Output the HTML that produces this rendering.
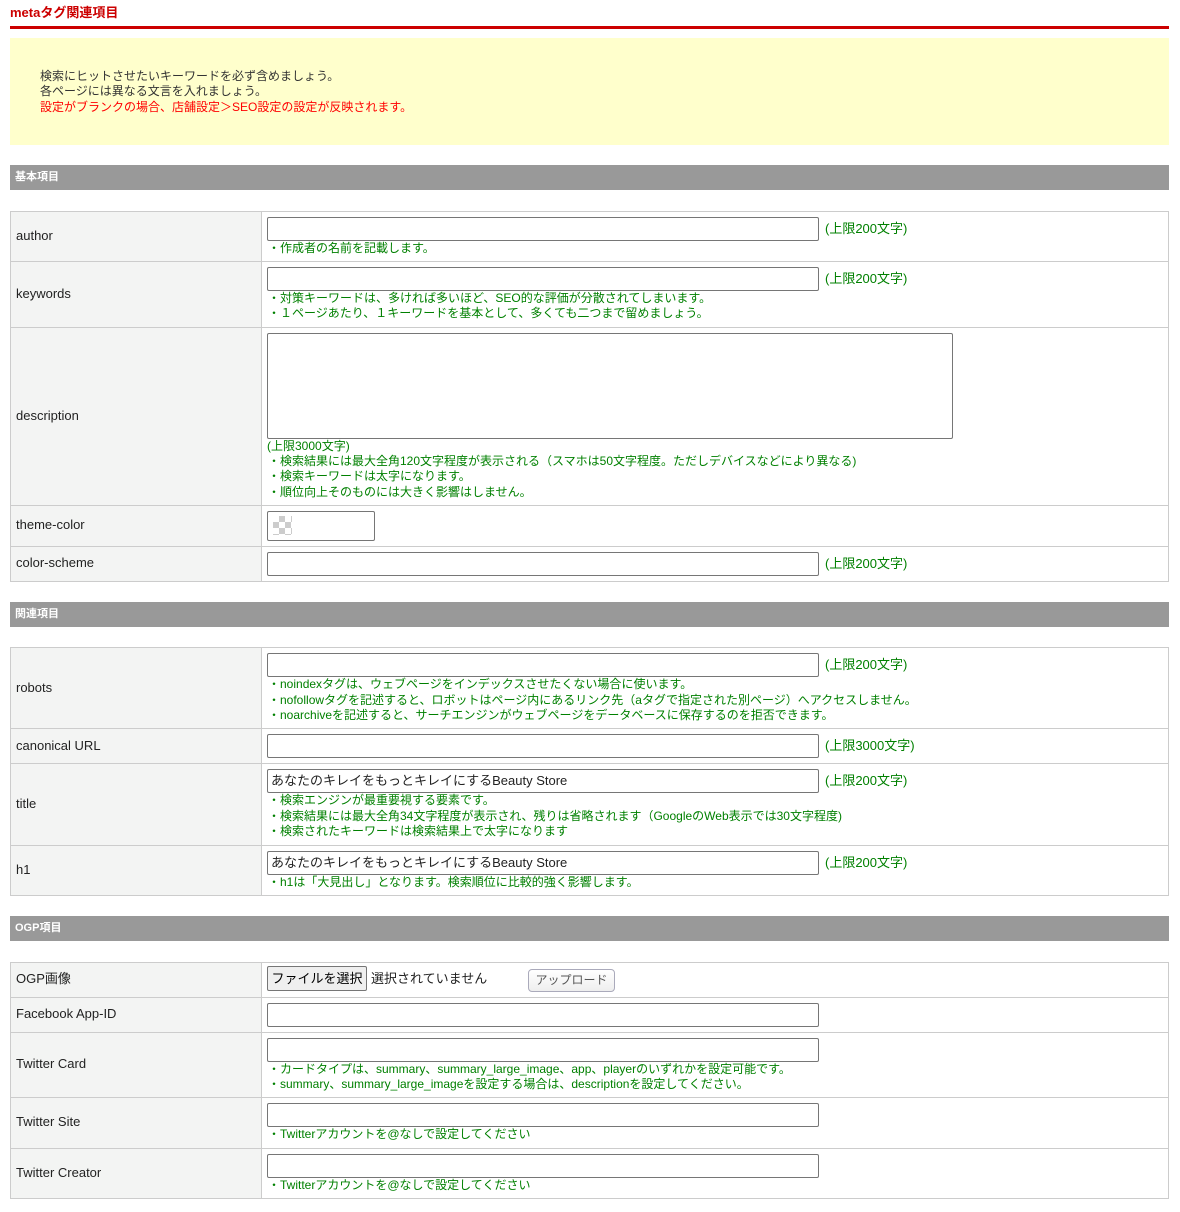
<!DOCTYPE html>
<html><head><meta charset="utf-8">
<style>
*{margin:0;padding:0;box-sizing:border-box}
body{width:1180px;height:1212px;background:#fff;position:relative;font-family:"Liberation Sans","Noto Sans CJK JP",sans-serif;font-size:12px;color:#333;overflow:hidden}
div,span{position:absolute}
.t{line-height:16px;white-space:nowrap;margin-top:1px}
.g{color:#008000}
.hd{left:10px;width:1159px;height:25px;background:#999;color:#fff;font-weight:bold;font-size:11px;padding:4px 5px;line-height:16px}
.lb{left:10px;width:252px;background:#f3f4f3;border:1px solid #ccc;border-right:1px solid #ccc}
.rw{left:261px;width:908px;border:1px solid #ccc;border-left:none}
.in{left:267px;width:552px;height:24px;border:1px solid #767676;border-radius:2px;background:#fff}
.lab{left:16px;color:#222;font-size:13px;line-height:16px}
.v{font-size:13px}
</style></head><body>
<div class="t" style="left:10px;top:4px;color:#c00;font-weight:bold;font-size:13px">metaタグ関連項目</div>
<div style="left:10px;top:26px;width:1159px;height:3px;background:#c00"></div>
<div style="left:10px;top:38px;width:1159px;height:107px;background:#ffc"></div>
<div class="t" style="left:40px;top:67px">検索にヒットさせたいキーワードを必ず含めましょう。</div>
<div class="t" style="left:40px;top:82px">各ページには異なる文言を入れましょう。</div>
<div class="t" style="left:40px;top:98px;color:#f00">設定がブランクの場合、店舗設定＞SEO設定の設定が反映されます。</div>

<div class="hd" style="top:165px">基本項目</div>

<div class="lb" style="top:211px;height:51px"></div><div class="rw" style="top:211px;height:51px"></div>
<div class="lb" style="top:261px;height:67px"></div><div class="rw" style="top:261px;height:67px"></div>
<div class="lb" style="top:327px;height:179px"></div><div class="rw" style="top:327px;height:179px"></div>
<div class="lb" style="top:505px;height:42px"></div><div class="rw" style="top:505px;height:42px"></div>
<div class="lb" style="top:546px;height:36px"></div><div class="rw" style="top:546px;height:36px"></div>

<div class="t lab" style="top:227px">author</div>
<div class="in" style="top:217px"></div><div class="t g v" style="left:825px;top:220px">(上限200文字)</div>
<div class="t g" style="left:268px;top:239px">・作成者の名前を記載します。</div>

<div class="t lab" style="top:285px">keywords</div>
<div class="in" style="top:267px"></div><div class="t g v" style="left:825px;top:270px">(上限200文字)</div>
<div class="t g" style="left:268px;top:289px">・対策キーワードは、多ければ多いほど、SEO的な評価が分散されてしまいます。</div>
<div class="t g" style="left:268px;top:304px">・１ページあたり、１キーワードを基本として、多くても二つまで留めましょう。</div>

<div class="t lab" style="top:407px">description</div>
<div class="in" style="top:333px;width:686px;height:106px"></div>
<div class="t g" style="left:267px;top:437px">(上限3000文字)</div>
<div class="t g" style="left:268px;top:452px">・検索結果には最大全角120文字程度が表示される（スマホは50文字程度。ただしデバイスなどにより異なる)</div>
<div class="t g" style="left:268px;top:467px">・検索キーワードは太字になります。</div>
<div class="t g" style="left:268px;top:483px">・順位向上そのものには大きく影響はしません。</div>

<div class="t lab" style="top:516px">theme-color</div>
<div class="in" style="top:511px;width:108px;height:30px"></div>
<div style="left:273px;top:516px;width:19px;height:19px;background:conic-gradient(#ccc 25%,#fff 0 50%,#ccc 0 75%,#fff 0);background-size:12px 12px"></div>

<div class="t lab" style="top:554px">color-scheme</div>
<div class="in" style="top:552px"></div><div class="t g v" style="left:825px;top:555px">(上限200文字)</div>

<div class="hd" style="top:602px">関連項目</div>

<div class="lb" style="top:647px;height:82px"></div><div class="rw" style="top:647px;height:82px"></div>
<div class="lb" style="top:728px;height:36px"></div><div class="rw" style="top:728px;height:36px"></div>
<div class="lb" style="top:763px;height:83px"></div><div class="rw" style="top:763px;height:83px"></div>
<div class="lb" style="top:845px;height:51px"></div><div class="rw" style="top:845px;height:51px"></div>

<div class="t lab" style="top:679px">robots</div>
<div class="in" style="top:653px"></div><div class="t g v" style="left:825px;top:656px">(上限200文字)</div>
<div class="t g" style="left:268px;top:675px">・noindexタグは、ウェブページをインデックスさせたくない場合に使います。</div>
<div class="t g" style="left:268px;top:691px">・nofollowタグを記述すると、ロボットはページ内にあるリンク先（aタグで指定された別ページ）へアクセスしません。</div>
<div class="t g" style="left:268px;top:706px">・noarchiveを記述すると、サーチエンジンがウェブページをデータベースに保存するのを拒否できます。</div>

<div class="t lab" style="top:737px">canonical URL</div>
<div class="in" style="top:734px"></div><div class="t g v" style="left:825px;top:737px">(上限3000文字)</div>

<div class="t lab" style="top:795px">title</div>
<div class="in" style="top:769px"></div><div class="t v" style="left:271px;top:772px;color:#222">あなたのキレイをもっとキレイにするBeauty Store</div>
<div class="t g v" style="left:825px;top:772px">(上限200文字)</div>
<div class="t g" style="left:268px;top:791px">・検索エンジンが最重要視する要素です。</div>
<div class="t g" style="left:268px;top:807px">・検索結果には最大全角34文字程度が表示され、残りは省略されます（GoogleのWeb表示では30文字程度)</div>
<div class="t g" style="left:268px;top:822px">・検索されたキーワードは検索結果上で太字になります</div>

<div class="t lab" style="top:861px">h1</div>
<div class="in" style="top:851px"></div><div class="t v" style="left:271px;top:854px;color:#222">あなたのキレイをもっとキレイにするBeauty Store</div>
<div class="t g v" style="left:825px;top:854px">(上限200文字)</div>
<div class="t g" style="left:268px;top:873px">・h1は「大見出し」となります。検索順位に比較的強く影響します。</div>

<div class="hd" style="top:916px">OGP項目</div>

<div class="lb" style="top:962px;height:36px"></div><div class="rw" style="top:962px;height:36px"></div>
<div class="lb" style="top:997px;height:36px"></div><div class="rw" style="top:997px;height:36px"></div>
<div class="lb" style="top:1032px;height:66px"></div><div class="rw" style="top:1032px;height:66px"></div>
<div class="lb" style="top:1097px;height:52px"></div><div class="rw" style="top:1097px;height:52px"></div>
<div class="lb" style="top:1148px;height:51px"></div><div class="rw" style="top:1148px;height:51px"></div>

<div class="t lab" style="top:970px">OGP画像</div>
<div style="left:267px;top:966px;width:100px;height:25px;background:#efefef;border:1px solid #767676;border-radius:2px;font-size:13px;line-height:23px;text-align:center;color:#000">ファイルを選択</div>
<div class="t v" style="left:371px;top:970px;color:#222">選択されていません</div>
<div style="left:528px;top:969px;width:87px;height:23px;background:linear-gradient(#fff,#eee);border:1px solid #aab;border-radius:4px;font-size:12px;line-height:20px;text-align:center;color:#555">アップロード</div>

<div class="t lab" style="top:1005px">Facebook App-ID</div>
<div class="in" style="top:1003px"></div>

<div class="t lab" style="top:1055px">Twitter Card</div>
<div class="in" style="top:1038px"></div>
<div class="t g" style="left:268px;top:1060px">・カードタイプは、summary、summary_large_image、app、playerのいずれかを設定可能です。</div>
<div class="t g" style="left:268px;top:1075px">・summary、summary_large_imageを設定する場合は、descriptionを設定してください。</div>

<div class="t lab" style="top:1113px">Twitter Site</div>
<div class="in" style="top:1103px"></div>
<div class="t g" style="left:268px;top:1125px">・Twitterアカウントを@なしで設定してください</div>

<div class="t lab" style="top:1164px">Twitter Creator</div>
<div class="in" style="top:1154px"></div>
<div class="t g" style="left:268px;top:1176px">・Twitterアカウントを@なしで設定してください</div>
</body></html>
